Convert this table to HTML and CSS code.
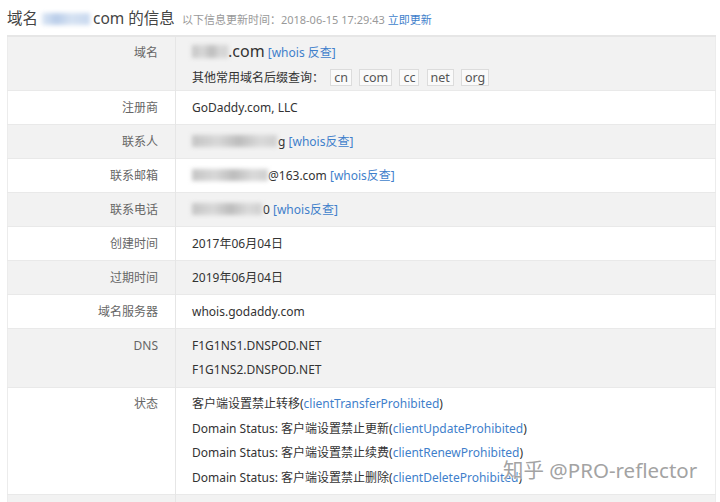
FILE: index.html
```html
<!DOCTYPE html>
<html lang="zh-CN">
<head>
  <meta charset="UTF-8" />
  <title>域名信息</title>
  <link rel="stylesheet" href="styles.css">
</head>
<body>
  <div class="page">
    <h2 class="title">
      域名<span class="blur blur-title"></span>com 的信息
      <small>以下信息更新时间：2018-06-15 17:29:43 <a href="#">立即更新</a></small>
    </h2>

    <table class="whois">
      <tr class="odd domain">
        <th>域名</th>
        <td>
          <div class="line"><span class="blur blur-domain"></span><span class="big">.com</span> <a href="#">[whois 反查]</a></div>
          <div class="line">其他常用域名后缀查询：
            <span class="tags">
              <a class="tag" href="#">cn</a>
              <a class="tag" href="#">com</a>
              <a class="tag" href="#">cc</a>
              <a class="tag" href="#">net</a>
              <a class="tag" href="#">org</a>
            </span>
          </div>
        </td>
      </tr>
      <tr>
        <th>注册商</th>
        <td>GoDaddy.com, LLC</td>
      </tr>
      <tr class="odd">
        <th>联系人</th>
        <td><span class="blur blur-name"></span>g <a href="#">[whois反查]</a></td>
      </tr>
      <tr>
        <th>联系邮箱</th>
        <td><span class="blur blur-mail"></span>@163.com <a href="#">[whois反查]</a></td>
      </tr>
      <tr class="odd">
        <th>联系电话</th>
        <td><span class="blur blur-phone"></span>0 <a href="#">[whois反查]</a></td>
      </tr>
      <tr>
        <th>创建时间</th>
        <td>2017年06月04日</td>
      </tr>
      <tr class="odd">
        <th>过期时间</th>
        <td>2019年06月04日</td>
      </tr>
      <tr>
        <th>域名服务器</th>
        <td>whois.godaddy.com</td>
      </tr>
      <tr class="odd multi">
        <th>DNS</th>
        <td>
          <div class="line">F1G1NS1.DNSPOD.NET</div>
          <div class="line">F1G1NS2.DNSPOD.NET</div>
        </td>
      </tr>
      <tr class="status">
        <th>状态</th>
        <td>
          <div class="line">客户端设置禁止转移(<a href="#">clientTransferProhibited</a>)</div>
          <div class="line">Domain Status: 客户端设置禁止更新(<a href="#">clientUpdateProhibited</a>)</div>
          <div class="line">Domain Status: 客户端设置禁止续费(<a href="#">clientRenewProhibited</a>)</div>
          <div class="line">Domain Status: 客户端设置禁止删除(<a href="#">clientDeleteProhibited</a>)</div>
        </td>
      </tr>
      <tr class="odd">
        <th>&nbsp;</th>
        <td>&nbsp;</td>
      </tr>
    </table>

    <div class="watermark">知乎 @PRO-reflector</div>
  </div>
</body>
</html>
```

FILE: styles.css
```css
body { margin: 0; background: #fff; font-family: "Noto Sans", "Noto Sans CJK SC", sans-serif; color: #333; }
a { color: #3f7fcb; text-decoration: none; }
.page { position: relative; margin: 0 4px 0 7px; }

.title {
  margin: 0;
  height: 35px;
  line-height: 36px;
  font-size: 15.5px;
  font-weight: 400;
  color: #444;
  white-space: nowrap;
}

.title small {
  font-size: 11px;
  color: #999;
  margin-left: 3px;
}

.whois {
  width: 100%;
  border-collapse: collapse;
  border: 1px solid #ececec;
  border-top: 2px solid #e6e6e6;
  font-size: 12px;
}

.whois tr { border-bottom: 1px solid #e9e9e9; }
.whois tr.odd { background: #f2f2f2; }

.whois th {
  width: 150px;
  padding: 5px 17px 4px 0;
  text-align: right;
  vertical-align: top;
  font-weight: 400;
  color: #666;
  line-height: 24px;
  border-right: 1px solid #e6e6e6;
}

.whois td {
  padding: 5px 0 4px 16px;
  line-height: 24px;
  vertical-align: top;
  color: #333;
}

.line { height: 24px; white-space: nowrap; }

.domain th, .domain td { padding-top: 3px; padding-bottom: 0; }
.domain th { padding-top: 4px; }
.domain .line { height: 25px; line-height: 25px; }
.multi td, .multi th { padding-bottom: 5px; }
.status td, .status th { padding-top: 4px; padding-bottom: 4px; }
.status .line { height: 24.5px; line-height: 24px; }

.big { font-size: 16px; line-height: 20px; }

.tags { margin-left: 3px; }
.tag {
  display: inline-block;
  line-height: 15px;
  padding: 0 3px;
  margin-right: 4px;
  border: 1px solid #dcdcdc;
  background: #fafafa;
  color: #555;
  font-size: 12.5px;
}

.blur {
  display: inline-block;
  height: 12px;
  vertical-align: -1px;
  background: linear-gradient(90deg, #c4c4c4 0%, #d8d8d8 30%, #bcbcbc 55%, #dadada 80%, #cfcfcf 100%);
  filter: blur(2px);
}
.blur-title { width: 48px; margin: 0 3px 0 4px; background: linear-gradient(90deg, #dce7f5, #b9cde9 30%, #d6e2f2 60%, #c9d9ef); }
.blur-domain { width: 36px; height: 13px; }
.blur-name { width: 85px; margin-right: 1px; }
.blur-mail { width: 76px; }
.blur-phone { width: 70px; margin-right: 1px; }

.watermark {
  position: absolute;
  left: 496px;
  top: 454px;
  font-size: 20.5px;
  color: #a3a3a3;
  text-shadow: 0 0 2px #fff, 0 0 1px #fff;
}
```
